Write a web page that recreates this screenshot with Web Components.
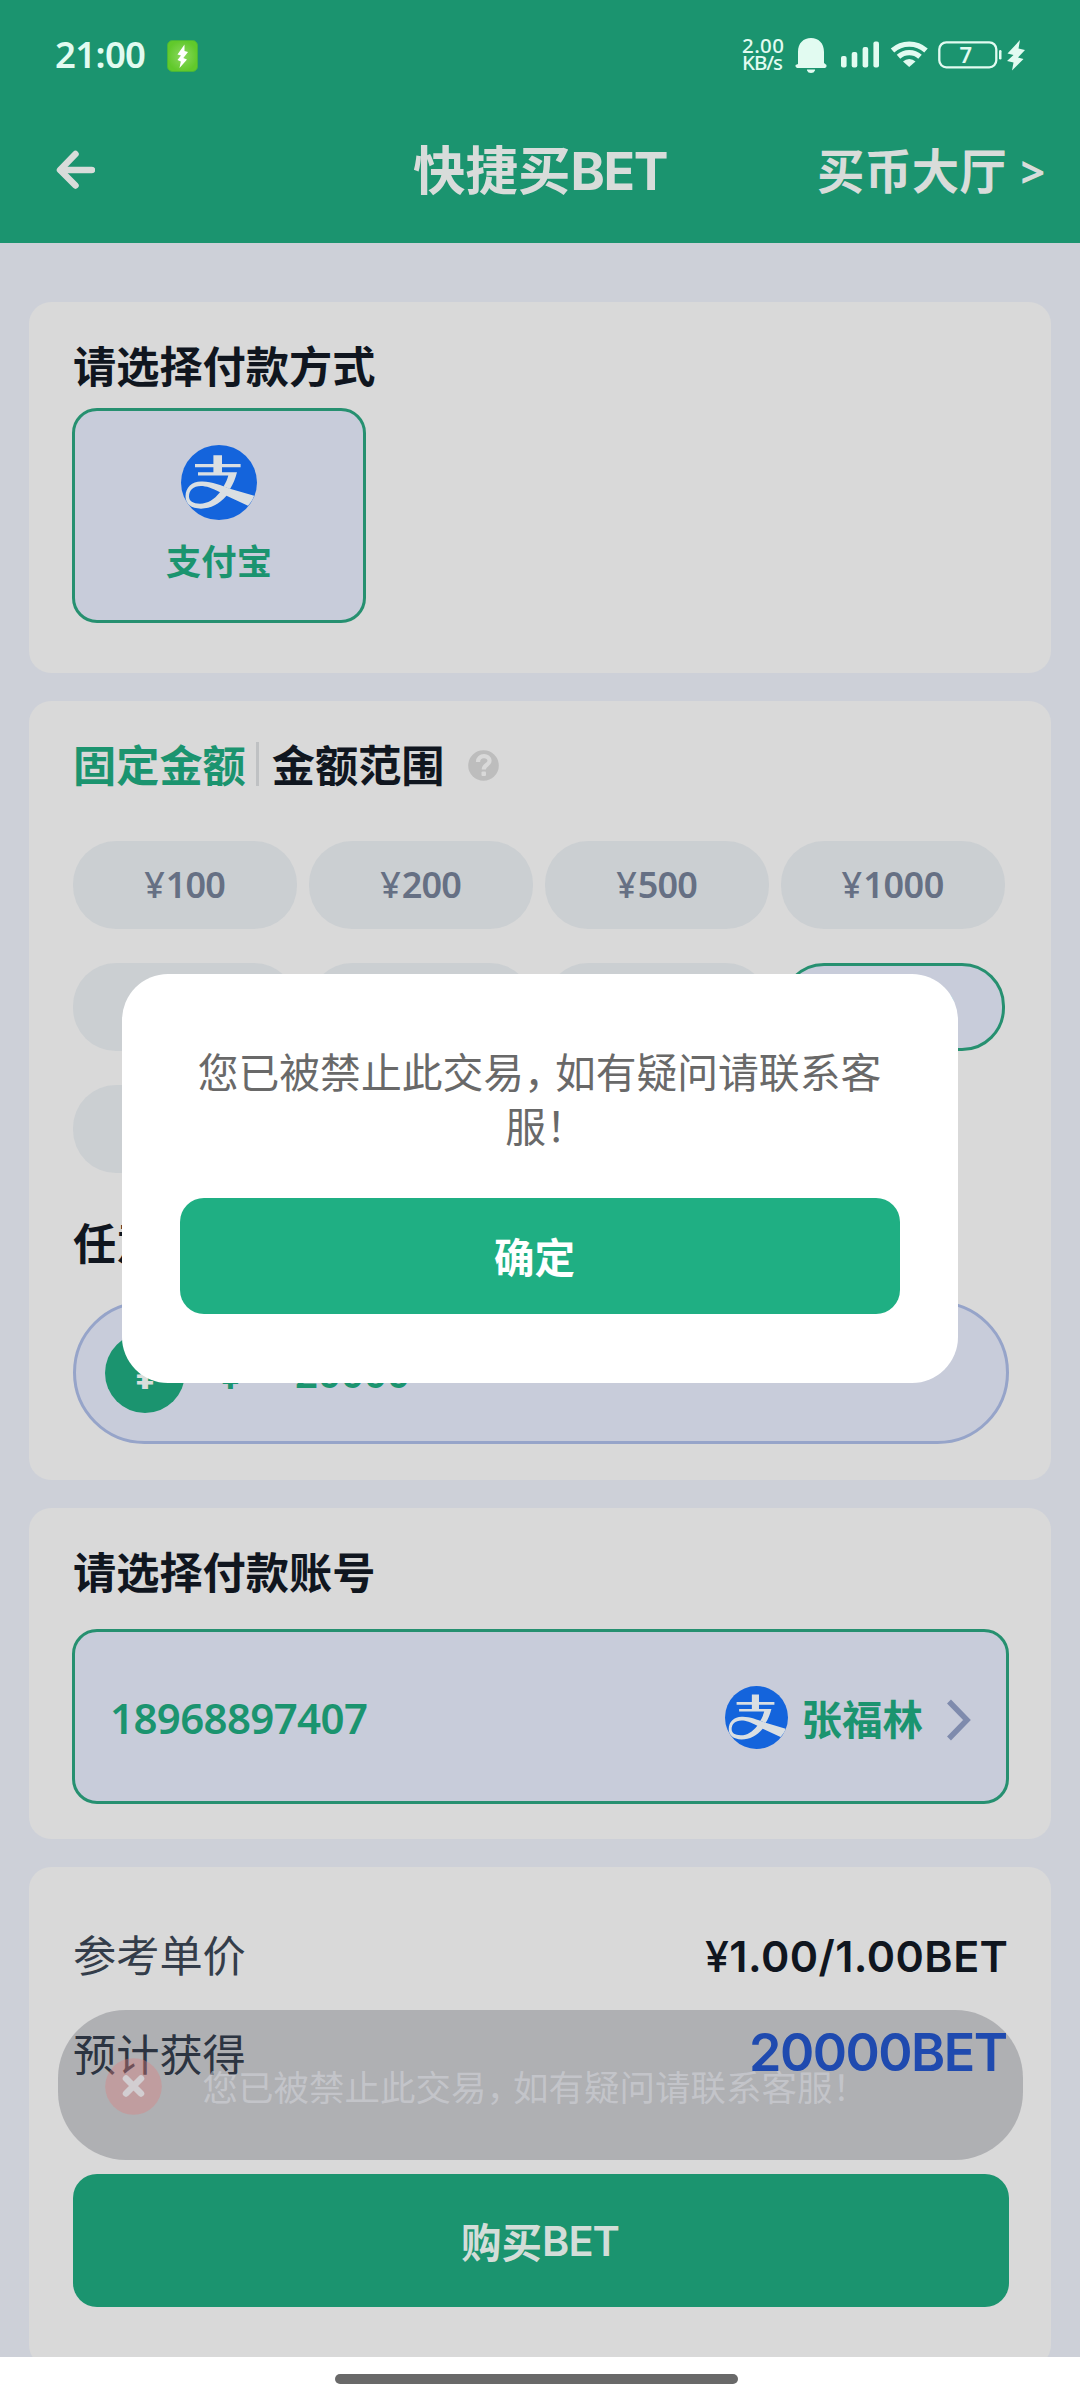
<!DOCTYPE html>
<html lang="zh-CN">
<head>
<meta charset="utf-8">
<title>快捷买BET</title>
<style>
html,body{margin:0;padding:0}
body{width:1080px;height:2400px;overflow:hidden;background:#fff;font-family:"Noto Sans CJK SC",sans-serif}
</style>
</head>
<body>
<buy-page></buy-page>
<script>
const define = (name, css, html, setup) => {
  const tpl = document.createElement('template');
  tpl.innerHTML = `<style>*{box-sizing:border-box}${css}</style>${html}`;
  customElements.define(name, class extends HTMLElement {
    constructor() {
      super();
      this.attachShadow({ mode: 'open' }).append(tpl.content.cloneNode(true));
    }
    connectedCallback() { if (setup) setup(this, this.shadowRoot); }
  });
};

define('alipay-logo', `:host{display:block;width:76px;height:75px}svg{display:block;width:100%;height:100%}`, `
<svg viewBox="0 0 76 76" preserveAspectRatio="none"><circle cx="38" cy="38" r="38" fill="#1464dc"/>
<g fill="#dadfe2"><path d="M32.4 10.3H41V29H32.4zM14 19.3H59.6V22.5H14z"/>
<path d="M17 27.7H56C54.5 34 52 40 49 44.5L42.5 42C45 38 46.5 34 47.3 30.9H17z"/>
<path fill-rule="evenodd" d="M20 37C30 36.500 40 41 49 44.300L73.200 51.500C72 55 70 58.500 67 61.500L45.500 51.500C38 60 30 64.500 20 64.500C10 64.500 4.500 59.500 4.500 52C4.500 43 11 37 20 37zM39 48C31 43.500 25 41.500 20 41.500C12 41.500 8 46 8 52C8 57 12 59.500 19 59.500C27 59.500 33 55.500 39 48z"/></g></svg>`);

define('status-bar', `
:host{display:flex;height:102px;padding-top:36px;align-items:flex-start;color:#e2fbf1;font-family:"Noto Sans",sans-serif}
.time{margin:2px 0 0 55px;font-size:36.500px;line-height:32px;font-weight:600;width:92px}
.app{margin:4px 0 0 20px;display:block}
.net{margin:1px 0 0 544px;width:43px;font-size:20.500px;line-height:17.300px;font-weight:500}
svg.icons{display:block;margin-left:10px;overflow:visible}
text{font-family:"Noto Sans",sans-serif;font-size:22px;font-weight:600}`, `
<div class="time"><fit-text w="91">21:00</fit-text></div>
<svg class="app" width="31" height="32" viewBox="0 0 31 32"><defs><radialGradient id="g"><stop offset="0" stop-color="#8bd860"/><stop offset="1" stop-color="#61c92b"/></radialGradient></defs><rect x=".5" y=".5" width="30" height="31" rx="5" fill="url(#g)" stroke="#48b63a"/><path d="M17.500 4.500L10.500 14.500L14 15.500L10.500 20L13.800 21.500L12.500 28L20 19.500L16.300 18L21 12L17.500 11z" fill="#fff"/></svg>
<div class="net"><div><fit-text w="42">2.00</fit-text></div><div><fit-text w="41">KB/s</fit-text></div></div>
<svg class="icons" width="232" height="36" viewBox="795 36 232 36" fill="#e2fbf1">
<path d="M798 64V52C798 43 803.500 38 811 38S824 43 824 52V63L826.500 65Q827 67.500 825 68H797Q795 67 795.500 65zM807 69.500H815V70.500Q814 73 811 73T807 70.500z"/>
<rect x="841" y="56" width="5.600" height="11.500" rx="2"/><rect x="851.700" y="52" width="5.600" height="15.500" rx="2"/><rect x="862.600" y="47" width="5.600" height="20.500" rx="2"/><rect x="873.400" y="41.500" width="5.600" height="26" rx="2"/>
<g fill="none" stroke="#e2fbf1" stroke-width="5.200"><path d="M892.500 50.500A25 25 0 0 1 926 50.500"/><path d="M898.500 56.800A16 16 0 0 1 920 56.800"/></g><path d="M903 61.500A9 9 0 0 1 915.500 61.500L909.200 67z"/>
<rect x="939.300" y="42.300" width="57" height="25" rx="7" fill="none" stroke="#e2fbf1" stroke-width="2.300"/><rect x="999" y="50" width="2.500" height="9.500" rx="1.200"/>
<text x="959.500" y="63">7</text>
<path d="M1020 40L1007.500 53.500L1013.500 55L1007 61L1013.500 62.500L1012 70.500L1023.500 59L1018 57.500L1025 50L1018.500 48.500z"/></svg>`);

define('nav-bar', `
:host{display:grid;grid-template-columns:380px 320px 1fr;height:141px;align-items:start;color:#d8dcda}
svg{margin:47px 0 0 55px;display:block}
.t{margin-top:27px;font-weight:700;font-size:52.500px;line-height:76px;white-space:nowrap;padding-left:33px;height:76px}
.l{margin-top:32.500px;font-weight:600;font-size:47.400px;line-height:68px;white-space:nowrap;padding-left:117px;display:flex}
.en{font:700 52px/60px Inter,sans-serif}
i{font:700 43px/68px "Noto Sans",sans-serif;margin:3px 0 0 14px}`, `
<svg width="40" height="40" viewBox="0 0 40 40" fill="none" stroke="#d8dcda" stroke-width="6.500" stroke-linecap="round" stroke-linejoin="round"><path d="M20.500 5L5 21L20.500 36.500" stroke-width="6.500"/><path d="M6 21H37"/></svg>
<div class="t">快捷买<fit-text class="en" w="98">BET</fit-text></div>
<div class="l">买币大厅<i>&gt;</i></div>`);

define('section-card', `
:host{display:block;width:1022px;padding:33px 42px 0 44px;border-radius:22px;background:#d9d9d9;flex:none}`, `<slot></slot>`);

define('section-title', `
:host{display:flex;height:58px;line-height:58px;font-size:43.200px;font-weight:600;color:#10161f;white-space:nowrap}`, `<slot></slot>`);

define('pay-method', `
:host{display:flex;flex-direction:column;align-items:center;width:294px;height:215px;margin:15px 0 0 -1px;padding-top:34px;border:3px solid #269070;border-radius:25px;background:#c8ccda}
div{margin-top:16.500px;font-size:35.300px;line-height:48px;font-weight:600;color:#1b946f}`, `<alipay-logo></alipay-logo><div><slot></slot></div>`);

define('amount-chip', `
:host{display:flex;align-items:center;justify-content:center;height:88px;border-radius:43px;background:#cbcfd2;color:#667084;font:600 36px/50px "Noto Sans",sans-serif}
:host([active]){background:#c8ccda;border:3px solid #269070;color:#1b946f}
i{font-style:normal;font-weight:500;margin-right:1px}`, `<i>¥</i><fit-text><slot></slot></fit-text>`,
(el, root) => { root.querySelector('fit-text').setAttribute('w', el.textContent.length * 21.300 - 4); });

define('amount-input', `
:host{display:flex;align-items:center;height:142.500px;margin-top:31px;padding-left:29px;border:3px solid #96a4c9;border-radius:72px;background:#c8ccda;font:600 40px/50px "Noto Sans",sans-serif;color:#1b946f}
b{display:flex;align-items:center;justify-content:center;width:80px;height:80px;border-radius:50%;background:#1b946f;color:#d9dedb;font-size:42px;font-weight:700}
i{font-style:normal;margin:2px 0 0 34px;width:76px}`, `<b>¥</b><i>¥</i><fit-text w="115"><slot></slot></fit-text>`);

define('pay-account', `
:host{display:flex;align-items:center;height:175px;margin:30.400px 0 0 -1px;padding:2px 33px 0 35px;border:3px solid #269070;border-radius:25px;background:#c8ccda;color:#1b946f}
.no{font:600 42px/56px "Noto Sans",sans-serif;flex:1}
alipay-logo{width:63px;height:63px;margin-right:14px}
.name{font-size:40.500px;line-height:56px;font-weight:600}
svg{margin:4px 0 0 22px;display:block}`, `
<div class="no"><fit-text w="256"><slot></slot></fit-text></div><alipay-logo></alipay-logo><div class="name"><slot name="name"></slot></div>
<svg width="28" height="42" viewBox="0 0 28 42"><path d="M4 2.500L22 21L4 39.500" fill="none" stroke="#7f8bad" stroke-width="5.500"/></svg>`);

define('info-row', `
:host{display:flex;align-items:center;justify-content:space-between;height:99px;font-size:43.200px;line-height:60px;color:#343d4a}
.v{font:600 43px/60px Inter,sans-serif;color:#10161f;margin-right:1px;padding-top:5px;display:flex}
:host([accent]) .v{font-size:52px;color:#2459d3;padding-top:2px}`, `<slot></slot><div class="v"><slot name="value"></slot></div>`);

define('main-button', `
:host{display:flex;align-items:center;justify-content:center;border-radius:24px;font-weight:600;font-size:40.500px;line-height:56px}`, `<slot></slot>`);

define('toast-message', `
:host{position:absolute;left:57.500px;top:2010px;width:965px;height:150px;border-radius:68px;background:rgba(15,20,35,.205);display:flex;align-items:center;padding-left:47px}
svg{display:block;margin-top:3px}
div{margin-left:41px;padding-top:1px;font-size:35.500px;line-height:50px;color:rgba(218,220,226,.48);white-space:nowrap}`, `
<svg width="57" height="57" viewBox="0 0 57 57"><circle cx="28.500" cy="28.500" r="28.300" fill="rgba(220,125,125,.38)"/><path d="M21 20.500L36 35.500M36 20.500L21 35.500" stroke="#d2ced1" stroke-width="6.500" stroke-linecap="round"/></svg><div><slot></slot></div>`);

define('alert-dialog', `
:host{position:absolute;left:122px;top:974px;width:836px;height:409px;border-radius:46px;background:#fff;display:flex;flex-direction:column;align-items:center;padding-top:69.500px}
p{margin:0;font-size:40.800px;line-height:54.500px;color:#696969;text-align:center;white-space:nowrap;height:154.500px;padding-right:1px}
main-button{width:720px;height:116px;background:#1faf83;color:#fff;font-weight:700;padding-right:11px}`, `<p><slot></slot></p><main-button>确定</main-button>`);

define('home-indicator', `
:host{display:flex;justify-content:center;height:43px;padding:17px 7px 0 0;background:#fff}
div{width:403px;height:10px;border-radius:5px;background:#696969}`, `<div></div>`);

define('buy-page', `
:host{display:block;position:relative;width:1080px;height:2400px}
header{background:#1b946f;height:243px}
main{height:2114px;background:#cdd0d8;padding:58.500px 0 0 29px;display:flex;flex-direction:column;overflow:hidden}
.c1{height:371px}.c2{height:778.500px;margin-top:28.500px}.c3{height:331px;margin-top:28.500px}.c4{height:500px;margin-top:28px;padding-top:36.500px}
.on{color:#1b946f}
.sep{width:2.500px;height:44px;margin:8px 13px 0 10.500px;background:#bfc1c3}
.help{margin:15.500px 0 0 23px}
.chips{display:grid;grid-template-columns:repeat(4,224px);column-gap:12px;row-gap:34.300px;margin-top:48.500px}
.any{margin-top:39.400px}
.buy{height:133px;margin-top:72.500px;background:#1b946f;color:#d3ddd8;padding-right:1px}
.buy fit-text{font:600 41.500px/56px Inter,sans-serif}
.cm{letter-spacing:-10px}.ex{letter-spacing:-13px}
.cs{letter-spacing:-9px}`, `
<header><status-bar></status-bar><nav-bar></nav-bar></header>
<main>
<section-card class="c1"><section-title>请选择付款方式</section-title><pay-method>支付宝</pay-method></section-card>
<section-card class="c2">
<section-title><span class="on">固定金额</span><span class="sep"></span><span>金额范围</span>
<svg class="help" width="31" height="31" viewBox="0 0 31 31"><circle cx="15.500" cy="15.500" r="15.300" fill="#bdbdbd"/><path d="M10 12C10 4 22 4.500 21.500 11C21.300 15 15.800 14.500 15.800 19.500" fill="none" stroke="#d9d9d9" stroke-width="4.200"/><rect x="13.500" y="21.500" width="4.500" height="4.500" rx="1" fill="#d9d9d9"/></svg></section-title>
<div class="chips"><amount-chip>100</amount-chip><amount-chip>200</amount-chip><amount-chip>500</amount-chip><amount-chip>1000</amount-chip><amount-chip>2000</amount-chip><amount-chip>5000</amount-chip><amount-chip>10000</amount-chip><amount-chip active>20000</amount-chip><amount-chip>50000</amount-chip></div>
<section-title class="any">任意金额</section-title>
<amount-input>20000</amount-input>
</section-card>
<section-card class="c3"><section-title>请选择付款账号</section-title><pay-account>18968897407<span slot="name">张福林</span></pay-account></section-card>
<section-card class="c4">
<info-row>参考单价<fit-text slot="value" w="303"><span style="font-weight:500">¥</span>1.00/1.00BET</fit-text></info-row>
<info-row accent>预计获得<fit-text slot="value" w="259">20000BET</fit-text></info-row>
<main-button class="buy">购买<fit-text w="78">BET</fit-text></main-button>
</section-card>
</main>
<home-indicator></home-indicator>
<toast-message>您已被禁止此交易<span class="cs">，</span>如有疑问请联系客服！</toast-message>
<alert-dialog>您已被禁止此交易<span class="cm">，</span>如有疑问请联系客<br>服<span class="ex">！</span></alert-dialog>`);

/* Spreads its letters so that the run takes the width given in "w". */
define('fit-text', `:host{display:inline-block;white-space:nowrap}span{display:inline-block}`, `<span><slot></slot></span>`, () => {});
const fit = root => root.querySelectorAll('*').forEach(el => {
  if (el.localName === 'fit-text' && el.getAttribute('w')) {
    const host = el.getRootNode().host;
    const chars = (el.textContent || host.textContent).trim().length;
    const span = el.shadowRoot.querySelector('span');
    const gap = (+el.getAttribute('w') - span.getBoundingClientRect().width) / Math.max(1, chars - 1);
    el.style.letterSpacing = gap + 'px';
    span.style.marginRight = -gap + 'px';
  }
  if (el.shadowRoot) fit(el.shadowRoot);
});
fit(document);
</script>
</body>
</html>
